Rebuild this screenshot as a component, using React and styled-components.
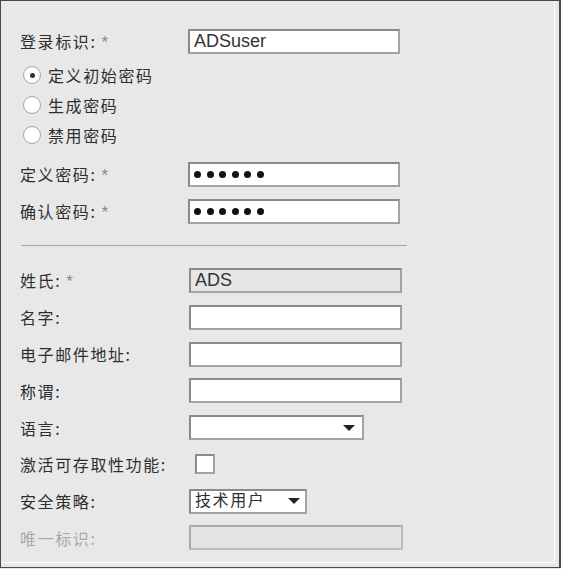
import styled, { createGlobalStyle } from "styled-components";

const GlobalStyle = createGlobalStyle`
  html, body {
    margin: 0;
    padding: 0;
    background: #e8e8e8;
  }
  body {
    font-family: "Liberation Sans", "Noto Sans CJK SC", sans-serif;
  }
`;

const Frame = styled.div`
  box-sizing: border-box;
  width: 561px;
  height: 568px;
  border: 1px solid #4a4a4a;
  border-right-width: 2px;
  background: #e8e8e8;
  box-shadow: inset -4px -4px 0 #e8e8e8, inset -5px -5px 0 #fbfbfb;
  padding: 28px 0 0 19px;
`;

const Group = styled.div`
  display: flex;
  flex-direction: column;
  gap: ${(p) => p.$gap || 12}px;
`;

const Row = styled.div`
  display: flex;
  align-items: center;
  height: ${(p) => p.$h || 25}px;
`;

const Label = styled.div`
  width: ${(p) => (p.$shift ? 169 : 168)}px;
  font-family: "Noto Sans CJK SC", "Liberation Sans", sans-serif;
  font-size: 16px;
  letter-spacing: 1.6px;
  color: ${(p) => (p.$muted ? "#a8a8a8" : "#2e2e2e")};
  line-height: 1;
  white-space: nowrap;
`;

const Star = styled.span`
  font-family: "Liberation Sans", sans-serif;
  font-size: 17px;
  color: #8a8a8a;
  letter-spacing: 0;
  margin-left: 5px;
`;

const Field = styled.div`
  box-sizing: border-box;
  width: ${(p) => p.$w || 213}px;
  height: 100%;
  border: 2px solid;
  border-color: #8a8a8a #a3a3a3 #a3a3a3 #8a8a8a;
  background: ${(p) => (p.$grey ? "#e6e6e6" : "#fff")};
  padding: 0 4px;
  display: flex;
  align-items: center;
  font-size: 18px;
  color: #333;
  position: relative;
`;

const Muted = styled(Field)`
  border-color: #a9a9a9 #bdbdbd #bdbdbd #a9a9a9;
  background: #e4e4e4;
`;

const Dots = styled.div`
  display: flex;
  gap: 5.5px;
  padding-left: 0;
`;

const Dot = styled.span`
  width: 7px;
  height: 7px;
  border-radius: 50%;
  background: #111;
`;

const Caret = styled.span`
  position: absolute;
  right: ${(p) => p.$r || 6}px;
  top: 50%;
  margin-top: -3px;
  width: 0;
  height: 0;
  border-left: 6px solid transparent;
  border-right: 6px solid transparent;
  border-top: 6px solid #222;
`;

const SelectText = styled.span`
  font-family: "Noto Sans CJK SC", sans-serif;
  font-size: 16px;
  letter-spacing: 1.6px;
  align-self: flex-start;
  line-height: 17px;
  color: #2e2e2e;
`;

const Radios = styled.div`
  display: flex;
  flex-direction: column;
  margin: 6px 0 12px 3px;
`;

const RadioRow = styled.div`
  display: flex;
  align-items: center;
  height: 30px;
  gap: 7px;
`;

const RadioDot = styled.span`
  box-sizing: border-box;
  width: 18px;
  height: 18px;
  border-radius: 50%;
  border: 1.5px solid #a6a6a6;
  background: radial-gradient(circle, #fff 55%, #eee 100%);
  display: flex;
  align-items: center;
  justify-content: center;
  &::after {
    content: "";
    width: 5px;
    height: 5px;
    border-radius: 50%;
    background: ${(p) => (p.$on ? "#333" : "transparent")};
  }
`;

const RadioLabel = styled.span`
  font-family: "Noto Sans CJK SC", sans-serif;
  font-size: 16px;
  letter-spacing: 1.6px;
  color: #2e2e2e;
`;

const Divider = styled.hr`
  width: 386px;
  margin: 21px 0 22px 1px;
  border: none;
  border-top: 1px solid #a6a6a6;
  height: 0;
`;

const Check = styled.span`
  box-sizing: border-box;
  width: 20px;
  height: 20px;
  margin-left: 6px;
  border: 2px solid;
  border-color: #8a8a8a #a3a3a3 #a3a3a3 #8a8a8a;
  background: #fff;
`;

const dots = (n) => (
  <Dots>
    {Array.from({ length: n }).map((_, i) => (
      <Dot key={i} />
    ))}
  </Dots>
);

export default function App() {
  return (
    <>
      <GlobalStyle />
      <Frame>
        <Row $h={25}>
          <Label>
            登录标识:<Star>*</Star>
          </Label>
          <Field $w={212}>ADSuser</Field>
        </Row>
        <Radios>
          <RadioRow>
            <RadioDot $on />
            <RadioLabel>定义初始密码</RadioLabel>
          </RadioRow>
          <RadioRow>
            <RadioDot />
            <RadioLabel>生成密码</RadioLabel>
          </RadioRow>
          <RadioRow>
            <RadioDot />
            <RadioLabel>禁用密码</RadioLabel>
          </RadioRow>
        </Radios>
        <Group>
          <Row>
            <Label>
              定义密码:<Star>*</Star>
            </Label>
            <Field $w={212}>{dots(6)}</Field>
          </Row>
          <Row>
            <Label>
              确认密码:<Star>*</Star>
            </Label>
            <Field $w={212}>{dots(6)}</Field>
          </Row>
        </Group>
        <Divider />
        <Group $gap={11.75}>
          <Row>
            <Label $shift>
              姓氏:<Star>*</Star>
            </Label>
            <Field $grey>ADS</Field>
          </Row>
          <Row>
            <Label $shift>名字:</Label>
            <Field />
          </Row>
          <Row>
            <Label $shift>电子邮件地址:</Label>
            <Field />
          </Row>
          <Row>
            <Label $shift>称谓:</Label>
            <Field />
          </Row>
          <Row>
            <Label $shift>语言:</Label>
            <Field $w={175}>
              <Caret $r={7} />
            </Field>
          </Row>
          <Row>
            <Label $shift>激活可存取性功能:</Label>
            <Check />
          </Row>
          <Row>
            <Label $shift>安全策略:</Label>
            <Field $w={118}>
              <SelectText>技术用户</SelectText>
              <Caret $r={5} />
            </Field>
          </Row>
          <Row>
            <Label $shift $muted>
              唯一标识:
            </Label>
            <Muted $w={214} />
          </Row>
        </Group>
      </Frame>
    </>
  );
}
